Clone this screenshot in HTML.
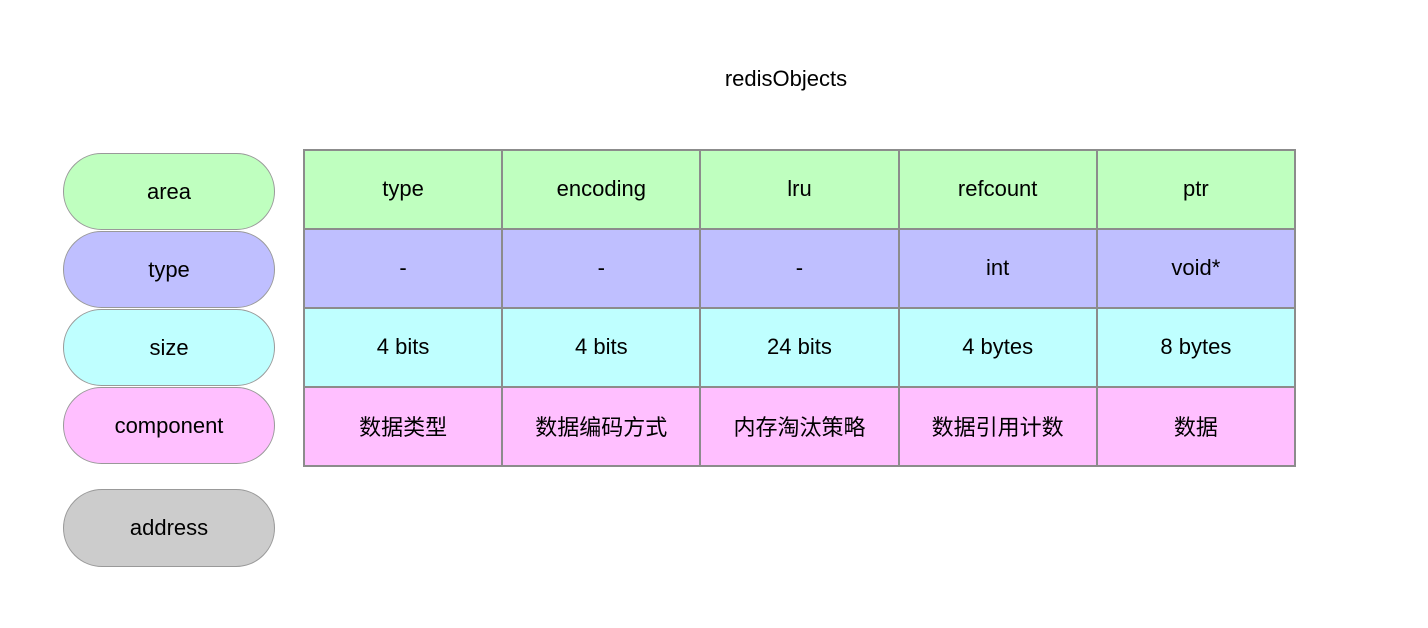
<!DOCTYPE html><html><head><meta charset="utf-8"><style>
body{margin:0;width:1428px;height:628px;background:#fff;position:relative;font-family:"Liberation Sans","Noto Sans CJK SC",sans-serif;color:#000;overflow:hidden}
.t{position:absolute;left:0;width:1572px;top:66px;text-align:center;font-size:22px}
.p{position:absolute;left:63px;border:1px solid #999;border-radius:39px;display:flex;align-items:center;justify-content:center;font-size:22px;box-sizing:border-box;width:212px}
table{position:absolute;left:303px;top:149px;border-collapse:collapse;width:993px}
td{border:2px solid #8c8c8c;height:77px;box-sizing:border-box;text-align:center;font-size:22px;width:198px;padding:0 0 2px 0}
tr{height:79px}
.g td{background:#bfffbf}.b td{background:#bfbfff}.c td{background:#bfffff}.m td{background:#ffbfff}
</style></head><body>
<div class="t">redisObjects</div>
<div class="p" style="top:153px;height:77px;background:#bfffbf">area</div>
<div class="p" style="top:231px;height:77px;background:#bfbfff">type</div>
<div class="p" style="top:309px;height:77px;background:#bfffff">size</div>
<div class="p" style="top:387px;height:77px;background:#ffbfff">component</div>
<div class="p" style="top:489px;height:78px;background:#cccccc">address</div>
<table>
<tr class="g"><td>type</td><td>encoding</td><td>lru</td><td>refcount</td><td>ptr</td></tr>
<tr class="b"><td>-</td><td>-</td><td>-</td><td>int</td><td>void*</td></tr>
<tr class="c"><td>4 bits</td><td>4 bits</td><td>24 bits</td><td>4 bytes</td><td>8 bytes</td></tr>
<tr class="m"><td>数据类型</td><td>数据编码方式</td><td>内存淘汰策略</td><td>数据引用计数</td><td>数据</td></tr>
</table>
</body></html>
